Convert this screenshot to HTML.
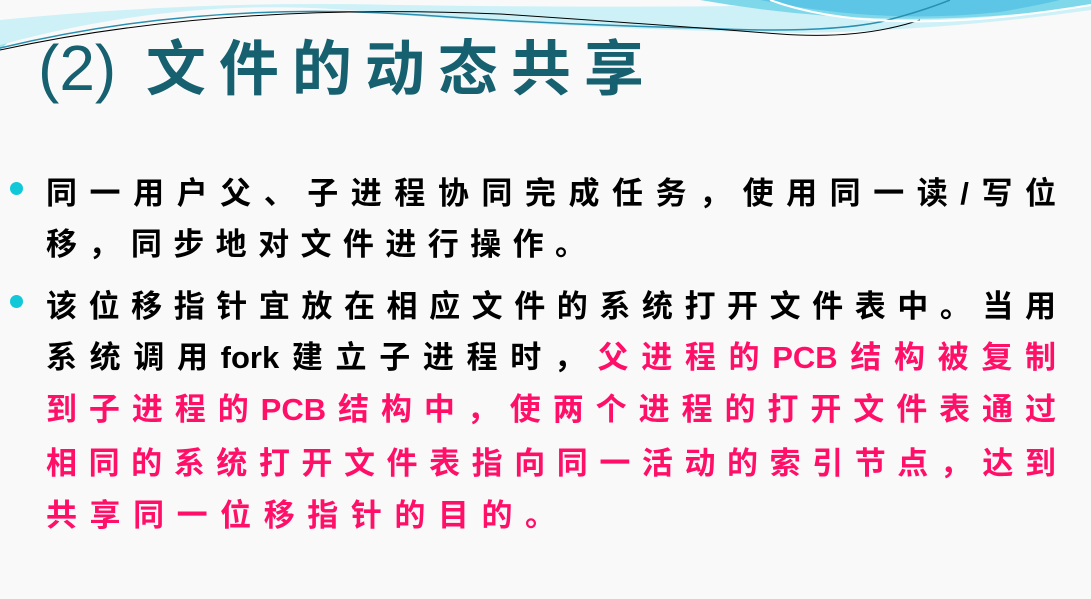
<!DOCTYPE html>
<html><head><meta charset="utf-8"><style>
body{margin:0;width:1091px;height:599px;overflow:hidden;background:#f9f9f9;position:relative;font-family:"Liberation Sans","Noto Sans CJK SC",sans-serif}
.t{position:absolute;left:38px;top:28px;font-size:60px;line-height:80px;color:#16606f;font-weight:bold;letter-spacing:13px;white-space:nowrap}
.t span{font-weight:normal;font-size:64px;letter-spacing:0}
.l{position:absolute;left:46px;width:1010px;font-size:31px;font-weight:bold;color:#000;text-align:justify;text-align-last:justify;white-space:nowrap;line-height:40px}
.p{color:#ff0f68}
.b{position:absolute;left:10px;width:13px;height:13px;border-radius:50%;background:#10c8d8}
</style></head><body>
<svg width="1091" height="130" style="position:absolute;left:0;top:0">
<path d="M0 0 H60 Q30 20 0 50Z" fill="#9ee3ef"/>
<path d="M0 45 Q200 -10 400 15 Q600 30 800 33 Q950 30 1091 10 V0 H0Z" fill="#cdf1f7"/>
<path d="M0 0 H1091 V0 Q700 10 400 5 Q200 0 0 20Z" fill="#f9f9f9"/>
<path d="M700 0 Q900 35 1091 5 V0Z" fill="#7fd8ea"/>
<path d="M760 0 Q880 25 1000 12 Q1040 5 1060 0Z" fill="#4fbfe4" opacity=".7"/>
<path d="M0 48 Q200 0 420 15 Q560 25 700 28 Q820 34 880 22 Q920 12 950 0" fill="none" stroke="#2a8fb0" stroke-width="1.5"/>
<path d="M0 50 Q220 2 500 14 Q650 24 780 34 Q860 40 920 20" fill="none" stroke="#000" stroke-width="1"/>
<path d="M770 0 Q880 40 1091 5" fill="none" stroke="#ffffff" stroke-width="2"/>
</svg>
<div class="t"><span>(2)</span> 文件的动态共享</div>
<div class="b" style="top:182px"></div>
<div class="b" style="top:295px"></div>
<div class="l" style="top:174px">同一用户父、子进程协同完成任务，使用同一读/写位</div>
<div class="l" style="top:225px;width:540px">移，同步地对文件进行操作。</div>
<div class="l" style="top:287px">该位移指针宜放在相应文件的系统打开文件表中。当用</div>
<div class="l" style="top:338px">系统调用fork建立子进程时，<span class="p">父进程的PCB结构被复制</span></div>
<div class="l p" style="top:390px">到子进程的PCB结构中，使两个进程的打开文件表通过</div>
<div class="l p" style="top:444px">相同的系统打开文件表指向同一活动的索引节点，达到</div>
<div class="l p" style="top:496px;width:510px">共享同一位移指针的目的。</div>
</body></html>
